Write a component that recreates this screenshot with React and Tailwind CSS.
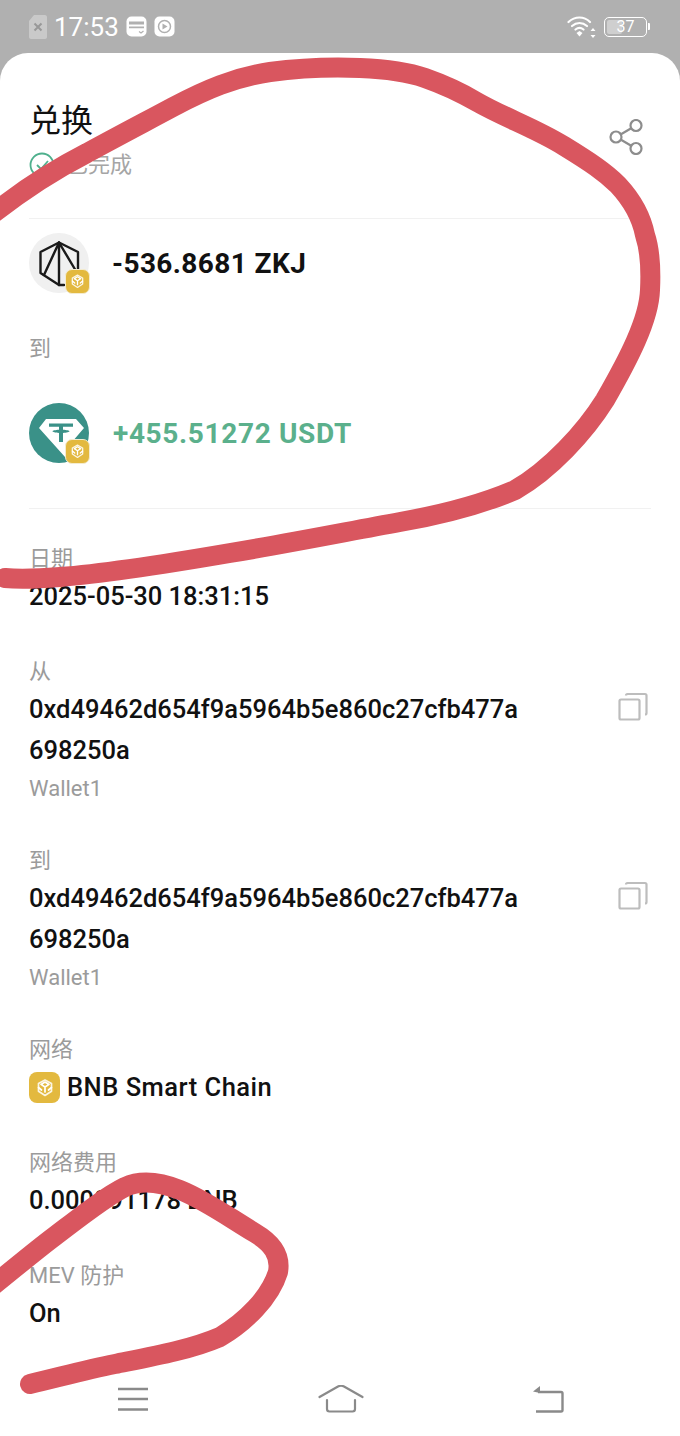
import React from 'react';

const CJK = "font-['Roboto','Noto_Sans_CJK_SC',sans-serif]";

function BnbGlyph({ className }) {
  return (
    <svg viewBox="0 0 24 24" className={className} fill="none" stroke="#fff" strokeWidth="1.700" strokeLinejoin="round" strokeLinecap="round">
      <path d="M12 4l6.500 3.600v7.600L12 19.500l-6.500-4.300V7.600z" opacity="0.85" />
      <path d="M8 8.400L12 6l4 2.400L12 11zM12 11v5" />
      <path d="M5.500 11.500L8.500 14M18.500 11.500L15.500 14" />
    </svg>
  );
}

function BnbBadge() {
  return (
    <div className="absolute -right-px -bottom-px flex h-[25px] w-[25px] items-center justify-center rounded-[7px] border border-[#f4ecd0] bg-[#e3b93f]">
      <BnbGlyph className="h-[19px] w-[19px]" />
    </div>
  );
}

function ZkjIcon() {
  return (
    <div className="relative flex h-[60px] w-[60px] shrink-0 items-center justify-center rounded-full bg-[#f0f0f0]">
      <svg viewBox="0 0 60 60" className="h-[60px] w-[60px]" fill="none" stroke="#1a1a1a" strokeWidth="2.400" strokeLinejoin="round" strokeLinecap="round">
        <path d="M30 9.500L49 19v23M30 9.500L11.500 19v21L30 52h5" />
        <path d="M30 9.500V52M30 9.500L47 38M30 9.500L15 42" />
      </svg>
      <BnbBadge />
    </div>
  );
}

function UsdtIcon() {
  return (
    <div className="relative h-[60px] w-[60px] shrink-0">
      <svg viewBox="0 0 60 60" className="h-[60px] w-[60px]">
        <circle cx="30" cy="30" r="30" fill="#3a9188" />
        <path d="M17 16h30l8 9-18 21 3 5-4 3-26-29z" fill="#fff" />
        <path d="M20 20.500h24v3.200h-10v3c3.500.2 6.500.8 6.500 1.600s-3 1.500-6.500 1.700V39h-4V30c-3.500-.2-6.500-.9-6.500-1.700s3-1.400 6.500-1.600v-3H20z" fill="#3a9188" />
      </svg>
      <BnbBadge />
    </div>
  );
}

function CopyIcon() {
  return (
    <svg viewBox="0 0 30 30" className="mt-[37px] h-[30px] w-[30px] shrink-0" fill="none" stroke="#bdbdbd" strokeWidth="2.200">
      <rect x="1.500" y="7.500" width="20" height="20" rx="1.500" />
      <path d="M8 3.500C8 2.500 8.500 2 9.500 2H27c1 0 1.500.5 1.500 1.500V21c0 1-.5 1.500-1.500 1.500" />
    </svg>
  );
}

function Field({ label, children }) {
  return (
    <div>
      <div className="text-[22px] leading-[34px] text-[#9b9b9b]">{label}</div>
      {children}
    </div>
  );
}

function Value({ children, className = '' }) {
  return <div className={`text-[25.5px] leading-[41px] font-medium text-[#111] ${className}`}>{children}</div>;
}

function AddressField({ label, address, name }) {
  return (
    <div className="flex items-start justify-between pr-[3px]">
      <Field label={label}>
        <Value>
          <div className="w-[495px] break-all">{address}</div>
        </Value>
        <div className="text-[22px] leading-[35px] text-[#9b9b9b]">{name}</div>
      </Field>
      <CopyIcon />
    </div>
  );
}

function StatusBar() {
  return (
    <div className="flex h-[53px] items-center justify-between bg-[#b0b0b0] pr-[30px] pl-[29px] text-white">
      <div className="flex items-center gap-[7px]">
        <svg viewBox="0 0 18 24" className="h-[24px] w-[18px]">
          <path d="M5 0h11c1 0 2 1 2 2v20c0 1-1 2-2 2H2c-1 0-2-1-2-2V6z" fill="#c9c9c9" />
          <path d="M5.500 8.500l7 7M12.500 8.500l-7 7" stroke="#989898" strokeWidth="2" />
        </svg>
        <span className="text-[26px] leading-none">17:53</span>
        <svg viewBox="0 0 21 21" className="h-[21px] w-[21px]">
          <rect width="20" height="20" x="0.500" y="0.500" rx="5" fill="#fff" />
          <path d="M3 5.500h15v3H3zM3 10.500h15v1.800H3z" fill="#b0b0b0" />
          <path d="M13 15.500l2 1.500 2.500-2" stroke="#b0b0b0" strokeWidth="1.200" fill="none" />
        </svg>
        <svg viewBox="0 0 21 21" className="h-[21px] w-[21px]">
          <rect width="20" height="20" x="0.500" y="0.500" rx="5" fill="#fff" />
          <circle cx="10.500" cy="10.500" r="6" fill="none" stroke="#b0b0b0" strokeWidth="1.500" />
          <path d="M8.500 7.500l5 3-5 3z" fill="#b0b0b0" />
        </svg>
      </div>
      <div className="flex items-center gap-[8px]">
        <svg viewBox="0 0 29 24" className="h-[24px] w-[29px]" fill="none" stroke="#fff" strokeWidth="2.200" strokeLinecap="round">
          <path d="M1.500 7C8 1 17 1 23 7M5 11c4.500-4 10.500-4 15 0M8.500 14.500c2.500-2 5.500-2 8 0" />
          <path d="M9.500 18l3-2 3 2-3 3.500z" fill="#fff" stroke="none" />
          <path d="M26 13l-2.500 3h5zM26 23l-2.500-3h5z" fill="#fff" stroke="none" />
        </svg>
        <div className="flex items-center gap-[1px]">
          <div className="relative flex h-[20px] w-[43px] items-center justify-center rounded-[5px] border border-white">
            <div className="absolute top-[2px] bottom-[2px] left-[2px] w-[15px] rounded-[2px] bg-[#cfcfcf]" />
            <span className="relative text-[16px] leading-none">37</span>
          </div>
          <div className="h-[7px] w-[2px] rounded-r-[1px] bg-white" />
        </div>
      </div>
    </div>
  );
}

function NavBar() {
  return (
    <div className="flex h-[58px] items-start bg-white pt-[7px]">
      <div className="flex w-[266px] justify-center pt-[2px]">
        <svg viewBox="0 0 32 24" className="h-[24px] w-[32px]" fill="none" stroke="#8a8a8a" strokeWidth="2.400">
          <path d="M1 2h30M1 12h30M1 22.500h30" />
        </svg>
      </div>
      <div className="flex w-[149px] justify-center">
        <svg viewBox="0 0 46 28" className="h-[28px] w-[46px]" fill="none" stroke="#8a8a8a" strokeWidth="2.200" strokeLinecap="round" strokeLinejoin="round">
          <path d="M1.500 12L20 1.500c2-1 4-1 6 0L44.500 12" />
          <path d="M9 15v9c0 1.500 1 2.500 2.500 2.500h23c1.500 0 2.500-1 2.500-2.500v-9" />
        </svg>
      </div>
      <div className="flex w-[265px] justify-center">
        <svg viewBox="0 0 32 28" className="h-[28px] w-[32px]" fill="none" stroke="#8a8a8a" strokeWidth="2.400" strokeLinejoin="round">
          <path d="M4 26.500h25c1 0 1.500-.5 1.500-1.500V8.500c0-1-.5-1.500-1.500-1.500H6" />
          <path d="M8 1L1 6.500l7 1.500z" fill="#8a8a8a" stroke="none" />
        </svg>
      </div>
    </div>
  );
}

// hand drawn marks on top of the screenshot
function Scribble() {
  return (
    <svg viewBox="0 0 680 1436" className="pointer-events-none absolute inset-0 h-[1436px] w-[680px]" fill="none" stroke="#d9565f" strokeLinecap="round" strokeLinejoin="round">
      <path
        strokeWidth="20"
        d="M-10 216C20 192 50 172 87 153C120 135 145 122 173 107C205 90 235 77 270 72C300 68 335 67 360 68C385 69 405 71 425 78C445 85 460 92 477 102C505 118 535 128 564 146C590 162 605 172 618 185C632 200 641 215 645 235C650 250 651 270 650 290C649 320 628 360 605 400C585 432 550 470 515 490C480 505 440 515 400 522C340 533 290 543 230 553C160 565 100 574 60 577C35 579 15 579 5 578"
      />
      <path
        strokeWidth="20"
        d="M30 1384C60 1377 85 1370 115 1364C150 1357 190 1350 220 1337C245 1322 270 1298 278 1272C281 1255 272 1243 255 1233C230 1218 205 1200 180 1190C160 1182 140 1180 125 1187C105 1197 80 1217 55 1236C35 1251 15 1268 -10 1288"
      />
    </svg>
  );
}

export default function App() {
  return (
    <div className={`relative h-[1436px] w-[680px] overflow-hidden bg-[#b0b0b0] ${CJK}`}>
      <StatusBar />
      <div className="flex h-[1383px] flex-col justify-between rounded-t-[28px] bg-white">
        <div className="px-[29px]">
          {/* Header */}
          <div className="flex items-center justify-between border-b border-[#f1f1f1] pt-[42px] pb-[36px] pr-[8px]">
            <div>
              <div className="text-[32px] leading-[53px] text-[#111]">兑换</div>
              <div className="flex items-center gap-[11px] text-[22px] leading-[34px] text-[#a5a5a5]">
                <svg viewBox="0 0 26 26" className="h-[26px] w-[26px]" fill="none" stroke="#4fb08d" strokeWidth="1.800">
                  <circle cx="13" cy="13" r="11.500" />
                  <path d="M8 13l4 4 7-8" />
                </svg>
                <span>已完成</span>
              </div>
            </div>
            <svg viewBox="0 0 34 36" className="mb-[3px] h-[36px] w-[34px]" fill="none" stroke="#8d8d8d" strokeWidth="2.200">
              <circle cx="7" cy="18" r="5.500" />
              <circle cx="27" cy="6.500" r="5.500" />
              <circle cx="27" cy="29.500" r="5.500" />
              <path d="M12 15.200L22.200 9.300M12 20.800L22.200 26.700" />
            </svg>
          </div>

          {/* Swap amounts */}
          <div className="border-b border-[#f1f1f1] pt-[14px] pb-[45px]">
            <div className="flex items-center gap-[23px]">
              <ZkjIcon />
              <span className="mt-[2px] text-[28px] leading-none font-bold tracking-[0.4px] text-[#111]">-536.8681 ZKJ</span>
            </div>
            <div className="pt-[39px] pb-[37px] text-[22px] leading-[34px] text-[#9b9b9b]">到</div>
            <div className="flex items-center gap-[24px]">
              <UsdtIcon />
              <span className="mt-[2px] text-[28px] leading-none font-bold tracking-[0.65px] text-[#5bb08c]">+455.51272 USDT</span>
            </div>
          </div>

          {/* Details */}
          <div className="flex flex-col gap-[38px] pt-[33px]">
            <Field label="日期">
              <Value>2025-05-30 18:31:15</Value>
            </Field>
            <AddressField label="从" address="0xd49462d654f9a5964b5e860c27cfb477a698250a" name="Wallet1" />
            <AddressField label="到" address="0xd49462d654f9a5964b5e860c27cfb477a698250a" name="Wallet1" />
            <Field label="网络">
              <div className="flex items-center gap-[7px]">
                <div className="flex h-[31px] w-[31px] items-center justify-center rounded-[8px] bg-[#e3b93f]">
                  <BnbGlyph className="h-[24px] w-[24px]" />
                </div>
                <Value className="tracking-[0.5px]">BNB Smart Chain</Value>
              </div>
            </Field>
            <Field label="网络费用">
              <Value>0.000091178 BNB</Value>
            </Field>
            <Field label="MEV 防护">
              <Value>On</Value>
            </Field>
          </div>
        </div>
        <NavBar />
      </div>
      <Scribble />
    </div>
  );
}
